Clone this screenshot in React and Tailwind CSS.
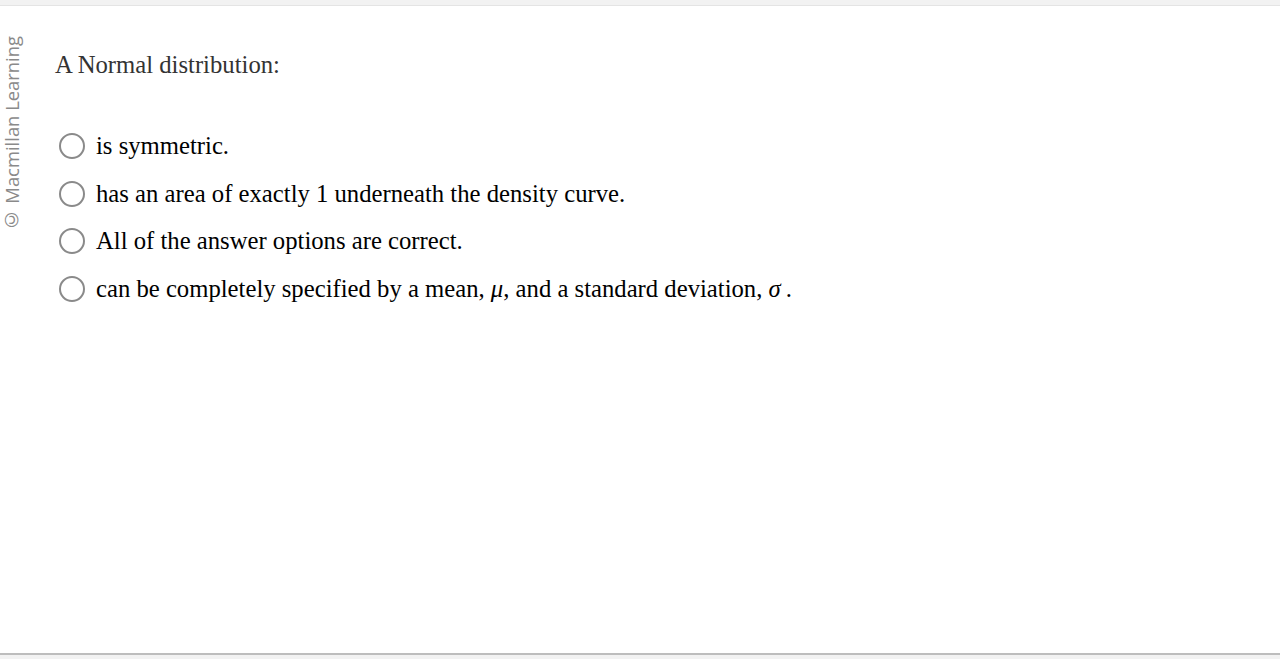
export default function App() {
  const serif = { fontFamily: '"Liberation Serif", "Times New Roman", serif' };
  const options = [
    <>is symmetric.</>,
    <>has an area of exactly 1 underneath the density curve.</>,
    <>All of the answer options are correct.</>,
    <>
      can be completely specified by a mean, <i>μ</i>, and a standard deviation, <i>σ</i>&thinsp;.
    </>,
  ];
  return (
    <div className="w-[1280px] h-[659px] bg-[#f2f2f2] pt-[5px] overflow-hidden">
      <div className="border-t border-[#e4e4e4] bg-white h-[650px] border-b-2 border-b-[#bdbdbd] flex">
        <div className="w-[24px] pl-[3px] pt-[30px] flex flex-col">
          <div
            className="[writing-mode:vertical-rl] rotate-180 text-[#8a8a8a] text-[18.4px] leading-[18px] whitespace-nowrap"
            style={{ fontFamily: '"Open Sans", sans-serif' }}
          >
            © Macmillan Learning
          </div>
        </div>
        <div className="pl-[31px] pt-[44px]" style={serif}>
          <div className="text-[24.7px] leading-[30px] text-[#333333]">A Normal distribution:</div>
          <div className="mt-[51px] flex flex-col gap-[17.7px] pl-[4px]">
            {options.map((o, i) => (
              <label key={i} className="flex items-center h-[30px] text-[24.7px] leading-[30px] text-black">
                <span className="w-[26px] h-[26px] rounded-full border-2 border-[#8a8a8a] mr-[11px] shrink-0 bg-white"></span>
                <span>{o}</span>
              </label>
            ))}
          </div>
        </div>
      </div>
    </div>
  );
}
